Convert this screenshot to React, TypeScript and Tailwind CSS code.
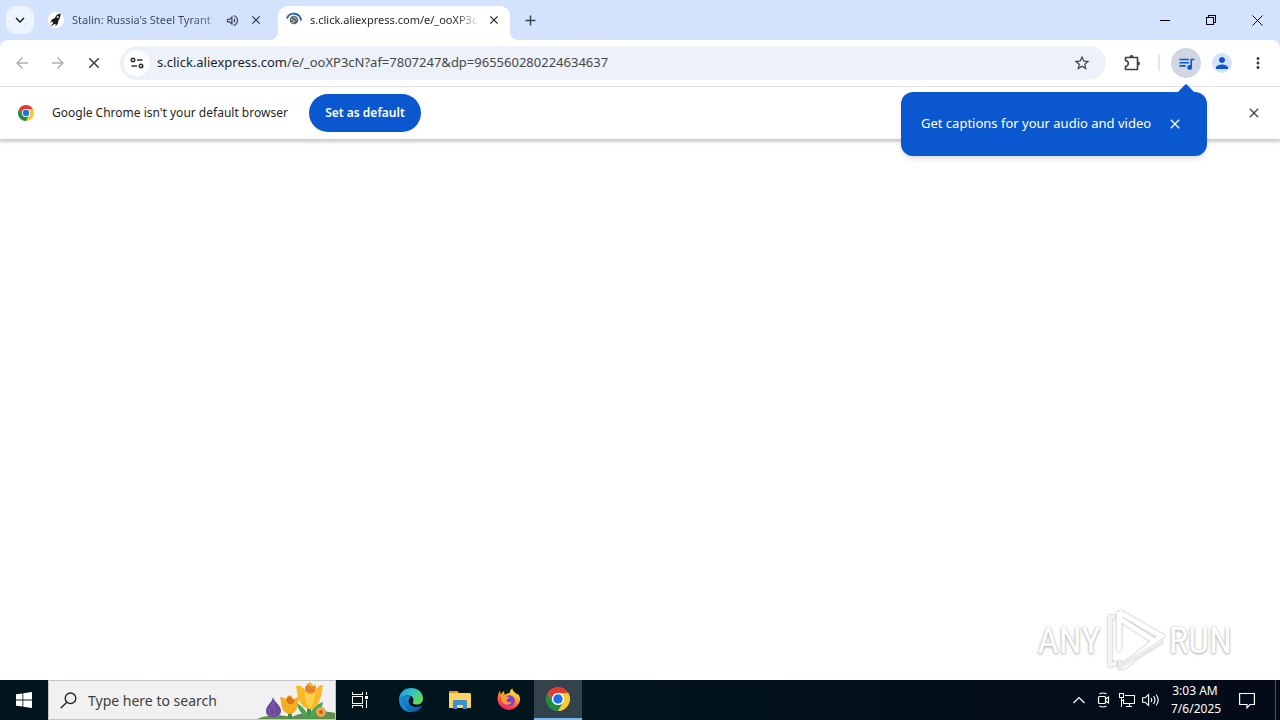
import type { ReactNode } from "react";
import {
  MdAdd,
  MdArrowBack,
  MdArrowForward,
  MdClose,
  MdKeyboardArrowDown,
  MdMoreVert,
  MdPerson,
  MdQueueMusic,
  MdStarBorder,
  MdOutlineVolumeUp,
} from "react-icons/md";

function IconButton({ label, className = "", children }: { label: string; className?: string; children: ReactNode }) {
  return (
    <button type="button" aria-label={label} className={`flex shrink-0 items-center justify-center ${className}`}>
      {children}
    </button>
  );
}

function ChromeLogo({ size, ring = "#fff" }: { size: number; ring?: string }) {
  return (
    <svg width={size} height={size} viewBox="0 0 48 48" aria-hidden="true">
      <circle cx="24" cy="24" r="23" fill="#fff" />
      <path d="M24 12h20.78A24 24 0 0 0 3.22 12l10.39 18A12 12 0 0 1 24 12z" fill="#e33b2e" />
      <path d="M34.39 30 24 48A24 24 0 0 0 44.78 12H24a12 12 0 0 1 10.39 18z" fill="#fcc934" />
      <path d="M13.61 30 3.22 12A24 24 0 0 0 24 48l10.39-18a12 12 0 0 1-20.78 0z" fill="#1e8e3e" />
      <circle cx="24" cy="24" r="12" fill={ring} />
      <circle cx="24" cy="24" r="9.5" fill="#1a73e8" />
    </svg>
  );
}

function RocketIcon() {
  return (
    <svg width="16" height="16" viewBox="0 0 16 16" aria-hidden="true">
      <circle cx="8" cy="8" r="8" fill="#fff" />
      <path d="M12.500 1.600c-2.800.3-4.500 1.800-5.700 4.500L4 7.500l-2 2.900 2.600-.9.400 1.800-2.600 3.100 3.800-2.200 1.500-.2-.1 2.300 2.400-2.700.3-2.800C12 6.700 12.800 4.400 12.500 1.600z" fill="#1d1b1a" />
      <circle cx="9.800" cy="5" r="1.100" fill="#e8e4dd" />
    </svg>
  );
}

function LoadingIcon() {
  return (
    <svg width="16" height="16" viewBox="0 0 16 16" aria-hidden="true">
      <path d="M1 6.500A7.200 7.200 0 0 1 15 8.500" fill="none" stroke="#2560b8" strokeWidth="2" />
      <circle cx="8" cy="8" r="4.300" fill="#5f6368" />
      <path d="M5 7.500c1.800-.2 1.700 1 3 1.100 1 .1.500 1.500-.5 1.600-.8.100-1 .8-1.700.3M8 4.600c-.2 1.300 1.100 1.500 1.700 1.700.8.300.5 1.300 1.600 1.100" fill="none" stroke="#dfe8f5" strokeWidth="1" />
    </svg>
  );
}

function TuneIcon() {
  return (
    <svg width="14" height="14" viewBox="0 0 14 14" fill="none" stroke="#303134" strokeWidth="1.600" aria-hidden="true">
      <circle cx="3" cy="4" r="1.700" />
      <path d="M7 4h5.500M1.500 10H7" />
      <circle cx="11" cy="10" r="1.700" />
    </svg>
  );
}

function PuzzleIcon() {
  return (
    <svg width="18" height="18" viewBox="0 0 18 18" aria-hidden="true">
      <path d="M2.500 3.500h12v12h-12v-3.200a2.600 2.600 0 0 0 0-5.600z" fill="none" stroke="#3c4043" strokeWidth="1.600" strokeLinejoin="round" />
      <path d="M6.500 3a2 2 0 0 1 4 0zM15 7.500a2 2 0 0 1 0 4z" fill="#3c4043" />
    </svg>
  );
}

function TabStrip() {
  return (
    <header className="flex h-10 shrink-0 items-end bg-[#d3e3fd]">
      <div className="flex h-10 w-[270px] shrink-0 items-center pl-1.5">
        <IconButton label="Search tabs" className="size-7 rounded-[10px] bg-[#eef4ff] text-[#1f1f1f]">
          <MdKeyboardArrowDown size={18} />
        </IconButton>
        <div className="ml-3.5 flex flex-1 items-center">
          <RocketIcon />
          <span className="ml-2 w-[148px] bg-linear-to-r from-[#3c4557] from-80% to-[#3c4557]/50 to-100% bg-clip-text text-[11px] whitespace-nowrap text-transparent">
            Stalin: Russia's Steel Tyrant
          </span>
          <IconButton label="Mute tab" className="ml-1 size-4 text-[#474c57]">
            <MdOutlineVolumeUp size={15} />
          </IconButton>
          <IconButton label="Close tab" className="ml-2 size-4 text-[#2c3340]">
            <MdClose size={14} />
          </IconButton>
        </div>
      </div>
      <div className="size-2 shrink-0 bg-white">
        <div className="size-2 rounded-br-lg bg-[#d3e3fd]" />
      </div>
      <div className="flex h-[34px] w-[232px] shrink-0 items-center rounded-t-[10px] bg-white pr-2 pb-1.5 pl-2">
        <LoadingIcon />
        <span className="ml-2 w-[170px] bg-linear-to-r from-[#1f1f1f] from-85% to-transparent to-100% bg-clip-text text-[11px] whitespace-nowrap text-transparent">
          s.click.aliexpress.com/e/_ooXP3c
        </span>
        <IconButton label="Close tab" className="ml-auto size-4 text-[#1f1f1f]">
          <MdClose size={14} />
        </IconButton>
      </div>
      <div className="size-2 shrink-0 bg-white">
        <div className="size-2 rounded-bl-lg bg-[#d3e3fd]" />
      </div>
      <IconButton label="New tab" className="h-10 w-6 text-[#3c4350]">
        <MdAdd size={17} />
      </IconButton>
      <div className="ml-auto flex h-10 shrink-0">
        <IconButton label="Minimize" className="w-[46px]">
          <svg width="11" height="11" viewBox="0 0 11 11" shapeRendering="crispEdges" aria-hidden="true">
            <path d="M0 5.500h10" stroke="#000" />
          </svg>
        </IconButton>
        <IconButton label="Restore" className="w-[46px]">
          <svg width="11" height="11" viewBox="0 0 11 11" fill="none" stroke="#000" shapeRendering="crispEdges" aria-hidden="true">
            <path d="M.5 2.500h7v7h-7zM2.500 2.500v-2h7v7h-2" />
          </svg>
        </IconButton>
        <IconButton label="Close" className="w-[46px]">
          <svg width="11" height="11" viewBox="0 0 11 11" stroke="#000" aria-hidden="true">
            <path d="m.5.500 10 10M10.500.500l-10 10" />
          </svg>
        </IconButton>
      </div>
    </header>
  );
}

function CaptionsTip() {
  return (
    <div role="status" className="absolute top-11 -right-1.5 z-10 flex h-16 w-[306px] items-center rounded-xl bg-[#0b57d0] pl-5 text-white shadow-md">
      <svg width="18" height="9" viewBox="0 0 18 9" className="absolute -top-2 right-3" aria-hidden="true">
        <path d="M0 9 7.500 1.200a2 2 0 0 1 3 0L18 9z" fill="#0b57d0" />
      </svg>
      <span className="text-[13px] whitespace-nowrap">Get captions for your audio and video</span>
      <IconButton label="Dismiss" className="ml-4 size-4">
        <MdClose size={16} />
      </IconButton>
    </div>
  );
}

function Toolbar() {
  return (
    <div className="shrink-0 bg-[#d3e3fd]">
      <div className="flex h-[46px] items-center rounded-t-lg bg-white pr-3 pl-3">
        <IconButton label="Back" className="size-5 text-[#aeb0b3]">
          <MdArrowBack size={18} />
        </IconButton>
        <IconButton label="Forward" className="ml-4 size-5 text-[#aeb0b3]">
          <MdArrowForward size={18} />
        </IconButton>
        <IconButton label="Stop loading" className="ml-4 size-5 text-[#3c4043]">
          <MdClose size={18} />
        </IconButton>
        <div className="ml-4 flex h-[34px] min-w-0 flex-1 items-center rounded-full bg-[#edf2fa] pr-3.5 pl-1">
          <IconButton label="View site information" className="size-[26px] rounded-full bg-white">
            <TuneIcon />
          </IconButton>
          <a href="#address" className="ml-[7px] min-w-0 flex-1 truncate text-[13px] text-[#474747]">
            <span className="text-[#1f1f1f]">s.click.aliexpress.com</span>/e/_ooXP3cN?af=7807247&amp;dp=965560280224634637
          </a>
          <IconButton label="Bookmark this tab" className="size-5 text-[#3c4043]">
            <MdStarBorder size={18} />
          </IconButton>
        </div>
        <IconButton label="Extensions" className="ml-4 size-5">
          <PuzzleIcon />
        </IconButton>
        <div className="ml-4 h-4 w-0.5 bg-[#dfe6f5]" />
        <div className="relative ml-[11px] shrink-0">
          <IconButton label="Control your music, videos, and more" className="size-[30px] rounded-full bg-[#d0d7e3] text-[#0b57d0]">
            <MdQueueMusic size={19} />
          </IconButton>
          <CaptionsTip />
        </div>
        <IconButton label="Profile" className="ml-[11px] size-5 rounded-full bg-[#d3e3fd] text-[#0b57d0]">
          <MdPerson size={18} />
        </IconButton>
        <IconButton label="More" className="ml-4 size-5 text-[#3c4043]">
          <MdMoreVert size={18} />
        </IconButton>
      </div>
    </div>
  );
}

function DefaultBrowserBar() {
  return (
    <div className="flex h-[54px] shrink-0 items-center border-t border-b border-t-[#dfe1e5] border-b-[#c9cbcd] bg-white pr-4 pl-[18px] shadow-[0_2px_3px_rgba(0,0,0,0.2)]">
      <ChromeLogo size={16} />
      <span className="ml-[18px] w-[241px] text-[12px] whitespace-nowrap text-[#1f1f1f]">Google Chrome isn't your default browser</span>
      <button type="button" className="ml-4 h-[38px] w-28 shrink-0 rounded-full bg-[#0b57d0] text-[12px] font-semibold whitespace-nowrap text-white">
        Set as default
      </button>
      <IconButton label="Dismiss" className="ml-auto size-5 text-[#474747]">
        <MdClose size={16} />
      </IconButton>
    </div>
  );
}

function Watermark() {
  return (
    <div className="mr-12 mb-2 flex items-center gap-1 font-['Roboto_Condensed','Open_Sans_Condensed','Noto_Sans_ExtraCondensed',Roboto,sans-serif] text-[37px] leading-none text-white [text-shadow:0_1px_3px_#aaa,0_0_2px_#ccc]">
      <span>ANY</span>
      <svg width="60" height="64" viewBox="0 0 60 64" fill="none" aria-hidden="true" className="drop-shadow-[0_0_1px_#aaa]">
        <path d="M10 9H5v48l7-2" stroke="#f5f5f5" strokeWidth="4" />
        <path d="M14 4v39M14 4l42 24-39 32M14 10l35 23" stroke="#fff" strokeWidth="5" />
        <path d="M15 53v6l42-26" stroke="#ececec" strokeWidth="4" />
      </svg>
      <span>RUN</span>
    </div>
  );
}

function EdgeIcon() {
  return (
    <svg width="26" height="26" viewBox="0 0 26 26" aria-hidden="true">
      <defs>
        <linearGradient id="edge-top" x1="0" y1="0" x2="1" y2=".6">
          <stop stopColor="#1793d8" />
          <stop offset=".55" stopColor="#36c5c0" />
          <stop offset="1" stopColor="#62dd53" />
        </linearGradient>
        <linearGradient id="edge-low" x1="0" y1="0" x2=".7" y2="1">
          <stop stopColor="#1b9ae0" />
          <stop offset="1" stopColor="#0c59a4" />
        </linearGradient>
      </defs>
      <path d="M1 13C1 5.500 6.500 1 13 1c7 0 12 4.800 12 10.500 0 4-3 6-6 6-3.500 0-4.700-1.400-4.200-2.300 2-3.300-.5-6.700-4.300-6.700C6 8.500 2 10.500 1 13z" fill="url(#edge-top)" />
      <path d="M1 13c.5-3 5-5 9-4.500-2.500 1.500-3.500 4-3.500 6.500 0 5 4 10 9.500 9.500C8 27 1 21 1 13z" fill="#1688d5" />
      <path d="M10 8.500C3.500 12 6 23.500 15.500 24.800c4 0 7-2.800 8.200-5.300.2-.7-.3-.9-.8-.6-5 2.600-12.400.7-12.300-5.100.1-1.500 1-2.600 2-3-.8-1.500-1.700-2-2.600-2.300z" fill="url(#edge-low)" />
    </svg>
  );
}

function FolderIcon() {
  return (
    <svg width="22" height="20" viewBox="0 0 22 20" aria-hidden="true">
      <path d="M0 2.500C0 1.500.500 1 1.500 1h7l2 2.500H0z" fill="#e09b23" />
      <path d="M0 3h20.500c.8 0 1.500.5 1.500 1.500V18H0z" fill="#fbd362" />
      <path d="M4 19v-7.500c0-.8.500-1.500 1.500-1.500h11c1 0 1.500.7 1.500 1.500V19h-4v-4H8v4z" fill="#3b8ed0" />
    </svg>
  );
}

function FirefoxIcon() {
  return (
    <svg width="24" height="24" viewBox="0 0 24 24" aria-hidden="true">
      <defs>
        <linearGradient id="fox" x1=".8" y1="0" x2=".3" y2="1">
          <stop stopColor="#fff04a" />
          <stop offset=".35" stopColor="#ffb52a" />
          <stop offset=".65" stopColor="#ff5a36" />
          <stop offset="1" stopColor="#e5197c" />
        </linearGradient>
      </defs>
      <path d="M23.200 11C22.800 7.500 21 5.800 19.500 5c.8 1.400.8 2.400.8 2.400C18.700 4 16 4.200 15.300.500 13 2 12.700 4.400 12.700 5c-1.700.1-3.300.7-4.500 1.700C7 5.800 7 4 7.200 3 5.500 3.800 4.300 5.500 3.700 6.300 3 5.300 3.200 3 3.400 2.200 1.300 4.500.500 8 .500 12a11.400 11.400 0 0 0 22.700-1z" fill="url(#fox)" />
      <circle cx="12.500" cy="12.500" r="5.300" fill="#7b3ecb" />
      <path d="M4 8c2-1 4-.3 5 .6 1.500 0 3 .4 3.300 1-.5 1.300-2.500 1.500-3 2.300.5 2.500 4 3 5.500 1.500-1 5-9.300 4-10.500-1.400z" fill="#ff9a2e" />
    </svg>
  );
}

function FlowerArt() {
  return (
    <svg width="80" height="38" viewBox="0 0 80 38" aria-hidden="true">
      <path d="M2 38c8-4 22-5 34-2 14-6 32-7 44-4v6z" fill="#5f8f50" />
      <path d="M18 16c1 5 8 8 8 14 0 4-4 6-8 6s-7-2-7-6c0-6 6-8 7-14z" fill="#6e4a9c" />
      <path d="M18 21c0 6 3 8 1 14M17 23c-3 5-3 8-1 12" stroke="#8866b5" fill="none" />
      <path d="M54 27v11M35 31v7" stroke="#3e8f45" strokeWidth="4" />
      <path d="M54 38c-8-5-11-9-12-16 6 4 10 8 12 16zM54 38c0-8 6-14 14-17-1 8-5 14-14 17z" fill="#4ba553" />
      <path d="M41 5c4-1 7 1 9 4 0-4 2-6 5-8 3 2 4 5 5 8 2-3 5-5 8-5-1 5-1 9-3 14-2 6-5 10-10 10s-9-4-11-9c-2-5-2-9-3-14z" fill="#f9b824" />
      <path d="M50 9c-1 7 1 13 5 19 4-6 6-12 5-19l-5 4z" fill="#ffd04c" />
      <path d="M50 6l3-3 4 3 4-2-1 7-4 2-5-2z" fill="#e5822a" />
      <path d="M25 16c3 0 5 1 6 3 0-3 2-4 4-5 2 1 3 3 4 5 1-2 3-3 5-3-1 4 0 7-2 11-2 4-4 6-7 6s-6-2-8-6c-1-4-1-7-2-11z" fill="#f7ad20" />
      <path d="M31 18l3-3 4 3 2 1-2 4h-5z" fill="#d9771c" />
      <circle cx="66" cy="31" r="5" fill="#f0a44d" />
      <circle cx="66" cy="31" r="2" fill="#c7661e" />
    </svg>
  );
}

function Taskbar() {
  return (
    <footer className="flex h-10 shrink-0 items-stretch bg-linear-to-r from-[#02151d] via-[#02141c] to-[#040a18] text-white">
      <IconButton label="Start" className="w-12">
        <svg width="16" height="16" viewBox="0 0 16 16" fill="#fff" aria-hidden="true">
          <path d="M0 2.300 6.500 1.400v6.200H0zM7.300 1.300 16 0v7.600H7.300zM0 8.400h6.500v6.200L0 13.700zM7.300 8.400H16V16l-8.700-1.300z" />
        </svg>
      </IconButton>
      <label className="flex w-72 shrink-0 items-center border border-[#c2c5c7] bg-[#f1f1f1] pl-[11px] text-[#1f1f1f]">
        <svg width="17" height="17" viewBox="0 0 17 17" fill="none" stroke="#1f1f1f" strokeWidth="1.300" aria-hidden="true">
          <circle cx="10.500" cy="6.300" r="5.300" />
          <path d="M6.800 10.200.700 16.300" />
        </svg>
        <input
          type="text"
          aria-label="Search"
          placeholder="Type here to search"
          className="ml-[11px] w-0 min-w-0 flex-1 bg-transparent text-[14px] outline-none placeholder:text-[#404040]"
        />
        <FlowerArt />
      </label>
      <IconButton label="Task view" className="w-12">
        <svg width="17" height="16" viewBox="0 0 17 16" fill="none" stroke="#fff" shapeRendering="crispEdges" aria-hidden="true">
          <path d="M.5 4.500h10v7H.500zM.500 0v2.500h10V0M.500 16v-2.500h10V16M14.500 0v3M14.500 8v8" />
          <path d="M13 4h3v3h-3z" fill="#fff" stroke="none" />
        </svg>
      </IconButton>
      <IconButton label="Microsoft Edge" className="ml-[3px] w-12">
        <EdgeIcon />
      </IconButton>
      <IconButton label="File Explorer" className="w-[49px]">
        <FolderIcon />
      </IconButton>
      <IconButton label="Firefox" className="w-[49px]">
        <FirefoxIcon />
      </IconButton>
      <IconButton label="Google Chrome" className="ml-px w-12 border-b-2 border-[#76b9ed] bg-[#34434b]">
        <ChromeLogo size={24} />
      </IconButton>
      <div className="ml-auto flex items-center">
        <IconButton label="Show hidden icons" className="w-6">
          <svg width="12" height="8" viewBox="0 0 12 8" fill="none" stroke="#fff" strokeWidth="1.200" aria-hidden="true">
            <path d="m.5 7 5.500-5.500L11.500 7" />
          </svg>
        </IconButton>
        <IconButton label="Meet now" className="w-6">
          <svg width="13" height="16" viewBox="0 0 13 16" fill="none" stroke="#fff" strokeWidth="1.200" aria-hidden="true">
            <rect x="1.500" y="4.500" width="7" height="7" rx="1" />
            <path d="M8.500 7 11.500 5v6l-3-2M2.500 2q3.500-2 7 0M2.500 14q3.500 2 7 0" />
          </svg>
        </IconButton>
        <IconButton label="Network" className="w-6">
          <svg width="17" height="16" viewBox="0 0 17 16" fill="none" stroke="#fff" shapeRendering="crispEdges" aria-hidden="true">
            <path d="M6 3.500h9.500v8H4.500V7M10 11.500v3M7 14.500h6M.500 1.500h4v4h-4zM2.500 5.500v9M2.500 8.500H4" />
          </svg>
        </IconButton>
        <IconButton label="Volume" className="w-6">
          <svg width="18" height="14" viewBox="0 0 18 14" fill="none" stroke="#fff" strokeWidth="1.100" aria-hidden="true">
            <path d="M.600 4.800h2.500L6.600 1.500v11L3.100 9.200H.600zM9 5q1.500 2 0 4M11.500 3.200q3 3.800 0 7.600M14 1.500q4.500 5.500 0 11" />
          </svg>
        </IconButton>
        <div className="ml-2 w-12 text-center text-[12px] leading-[18px] whitespace-nowrap">
          <div>3:03 AM</div>
          <div>7/6/2025</div>
        </div>
        <IconButton label="Notifications" className="ml-3 w-8">
          <svg width="16" height="17" viewBox="0 0 16 17" fill="none" stroke="#fff" strokeWidth="1.200" aria-hidden="true">
            <path d="M.6 1.500h14.800v11H11L8 15.800v-3.300H.600z" />
          </svg>
        </IconButton>
        <div className="ml-3 h-10 w-[5px] border-l border-[#4b535e]" />
      </div>
    </footer>
  );
}

export default function App() {
  return (
    <div className="flex min-h-screen flex-col overflow-hidden bg-white font-['Noto_Sans','Open_Sans',sans-serif]">
      <TabStrip />
      <Toolbar />
      <DefaultBrowserBar />
      <main className="flex flex-1 items-end justify-end">
        <Watermark />
      </main>
      <Taskbar />
    </div>
  );
}
